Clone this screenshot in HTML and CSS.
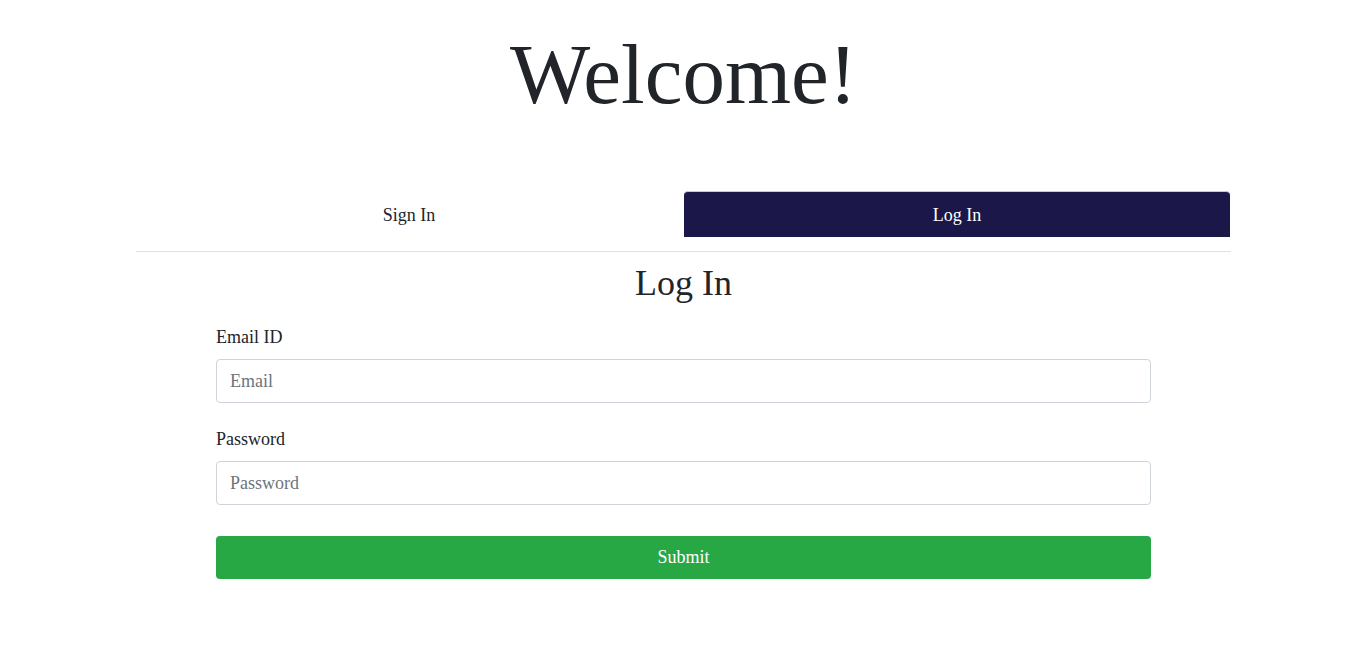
FILE: index.html
```html
<!DOCTYPE html>
<html lang="en">
<head>
<meta charset="utf-8">
<title>Welcome</title>
<link rel="stylesheet" href="styles.css">
</head>
<body>
<main class="page">
  <h1 class="welcome">Welcome!</h1>
  <div class="panel">
    <nav class="tabs">
      <button class="tab" type="button">Sign In</button>
      <button class="tab tab-active" type="button">Log In</button>
    </nav>
    <section class="form-wrap">
      <h2 class="form-title">Log In</h2>
      <form class="form">
        <div class="field">
          <label class="label" for="email">Email ID</label>
          <input class="input" id="email" type="email" placeholder="Email">
        </div>
        <div class="field">
          <label class="label" for="password">Password</label>
          <input class="input" id="password" type="password" placeholder="Password">
        </div>
        <button class="submit" type="button">Submit</button>
      </form>
    </section>
  </div>
</main>
</body>
</html>
```
FILE: styles.css
```css
* { box-sizing: border-box; }
html, body { margin: 0; padding: 0; background: #fff; }
body {
  font-family: "Liberation Serif", "Times New Roman", serif;
  font-size: 18px;
  line-height: 1.5;
  color: #212529;
}
.page {
  display: flex;
  flex-direction: column;
  align-items: center;
  padding-top: 23px;
}
.welcome {
  margin: 0;
  font-size: 85px;
  font-weight: 400;
  line-height: 102px;
  color: #212529;
}
.panel {
  width: 1095px;
  margin-top: 66px;
}
.tabs {
  display: flex;
  padding-bottom: 14px;
  border-bottom: 1px solid #dee2e6;
}
.tab {
  flex: 1;
  height: 46px;
  border: 0;
  background: transparent;
  font-family: inherit;
  font-size: 18px;
  color: #212529;
  border-radius: 4px 4px 0 0;
  padding: 2px 0 0;
}
.tab-active {
  background: #1b1749;
  color: #fff;
  margin-left: 2px;
  margin-right: 1px;
  border-top: 1px solid #c9c9d6;
  padding-top: 1px;
}
.form-wrap {
  display: flex;
  flex-direction: column;
  align-items: center;
  padding-top: 10px;
}
.form-title {
  margin: 0;
  font-size: 36px;
  font-weight: 400;
  line-height: 1.2;
}
.form {
  width: 935px;
  margin-top: 19px;
  display: flex;
  flex-direction: column;
}
.field {
  display: flex;
  flex-direction: column;
  margin-bottom: 23px;
}
.label {
  margin-bottom: 8px;
  font-size: 18px;
  line-height: 27px;
}
.input {
  height: 44px;
  border: 1px solid #ced4da;
  border-radius: 4px;
  padding: 0 13px;
  font-family: inherit;
  font-size: 18px;
  color: #495057;
  background: #fff;
}
.input::placeholder { color: #6c757d; }
.submit {
  margin-top: 8px;
  height: 43px;
  border: 0;
  border-radius: 4px;
  background: #28a745;
  color: #fff;
  font-family: inherit;
  font-size: 18px;
  padding: 0;
}
```
